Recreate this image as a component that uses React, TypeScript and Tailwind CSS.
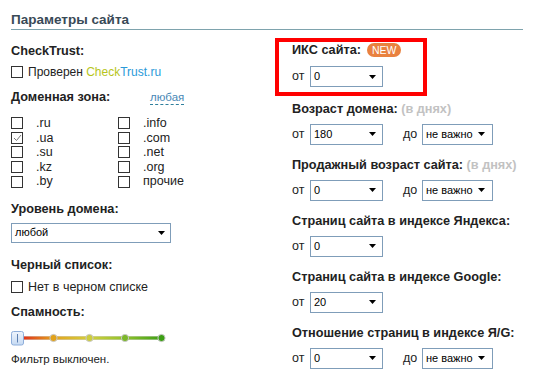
import React from 'react';

const Arrow = () => (
  <svg width="7" height="4" viewBox="0 0 7 4" className="shrink-0">
    <polygon points="0,0 7,0 3.5,4" fill="#000" />
  </svg>
);

function Select({ value, className }: { value: string; className: string }) {
  return (
    <div
      className={`flex items-center justify-between border border-[#7f9db9] bg-white pl-[3px] text-[11px] leading-none text-black ${className}`}
    >
      <span>{value}</span>
      <Arrow />
    </div>
  );
}

function Box({ checked = false }: { checked?: boolean }) {
  return (
    <span className="flex h-[12px] w-[12px] shrink-0 items-center justify-center border border-[#333] bg-white">
      {checked && (
        <svg width="9" height="8" viewBox="0 0 9 8">
          <path d="M1 4 L3.5 6.5 L8 1" fill="none" stroke="#777" strokeWidth="1" />
        </svg>
      )}
    </span>
  );
}

function Label({ children, className = '' }: { children: React.ReactNode; className?: string }) {
  return <div className={`text-[12.7px] font-bold leading-[16px] text-[#222] ${className}`}>{children}</div>;
}

function Range({ label, from, to }: { label: React.ReactNode; from: string; to?: string }) {
  return (
    <div className="flex flex-col">
      <Label>{label}</Label>
      <div className="mt-[7px] flex items-center text-[12.5px]">
        <span className="w-[18px]">от</span>
        <Select value={from} className="h-[21px] w-[73px] pr-[6px]" />
        {to && (
          <>
            <span className="ml-[20px] w-[19px]">до</span>
            <Select value={to} className="h-[21px] w-[71px] pr-[7px]" />
          </>
        )}
      </div>
    </div>
  );
}

const zones = [
  ['.ru', '.info'],
  ['.ua', '.com'],
  ['.su', '.net'],
  ['.kz', '.org'],
  ['.by', 'прочие'],
];

function Spam() {
  return (
    <svg width="160" height="16" viewBox="0 0 160 16" className="mt-[10px]">
      <defs>
        <linearGradient id="track" x1="0" x2="1" y1="0" y2="0">
          <stop offset="0" stopColor="#e2321a" />
          <stop offset="0.22" stopColor="#e4a31e" />
          <stop offset="0.48" stopColor="#d3cf3c" />
          <stop offset="0.74" stopColor="#8fc22c" />
          <stop offset="1" stopColor="#3c9f14" />
        </linearGradient>
        <linearGradient id="thumb" x1="0" x2="0" y1="0" y2="1">
          <stop offset="0" stopColor="#eef4fc" />
          <stop offset="1" stopColor="#c6daf3" />
        </linearGradient>
      </defs>
      <rect x="12" y="6" width="140" height="4" fill="#d0d0d0" />
      <rect x="12" y="6.5" width="139" height="3" fill="url(#track)" />
      {[
        [42.5, '#e2a21a'],
        [78.5, '#cdcd3e'],
        [114, '#7cb82a'],
        [150.5, '#3c9f14'],
      ].map(([x, c]) => (
        <circle key={x as number} cx={x as number} cy="8" r="3.6" fill={c as string} stroke="#c8c8c8" strokeWidth="1" />
      ))}
      <rect x="0.5" y="1.5" width="12" height="13.5" rx="2" fill="url(#thumb)" stroke="#8eaedb" />
      <line x1="6.5" y1="4" x2="6.5" y2="12.5" stroke="#5d7fb0" strokeWidth="1" />
    </svg>
  );
}

export default function App() {
  return (
    <div className="h-[382px] w-[534px] overflow-hidden bg-white font-['Liberation_Sans',Arial,sans-serif] text-[#222]">
      <div className="mx-[11px] border-b border-[#7ea3ad] pb-[1px] pt-[12px] text-[13.5px] font-bold leading-[16px] text-[#394a57]">
        Параметры сайта
      </div>

      <div className="flex">
        {/* left column */}
        <div className="flex w-[275px] shrink-0 flex-col pl-[11px]">
          <Label className="mt-[13px]">CheckTrust:</Label>
          <div className="mt-[7px] flex h-[12px] items-center gap-[5px] text-[12px]">
            <Box />
            <span>
              Проверен <span className="text-[#b7c51c]">Check</span>
              <span className="text-[#2a9ad9]">Trust.ru</span>
            </span>
          </div>

          <div className="mt-[11px] flex items-center">
            <Label className="w-[139px]">Доменная зона:</Label>
            <span className="border-b border-dashed border-[#2f7f9c] text-[11.5px] leading-[14px] text-[#4787b5]">
              любая
            </span>
          </div>

          <div className="mt-[11px] grid w-[200px] grid-cols-[107px_1fr] text-[12.5px]">
            {zones.map(([a, b], i) => (
              <React.Fragment key={a}>
                <div className="flex h-[14.6px] items-center gap-[13px]">
                  <Box checked={i === 1} />
                  <span className="leading-none">{a}</span>
                </div>
                <div className="flex h-[14.6px] items-center gap-[13px]">
                  <Box />
                  <span className="leading-none">{b}</span>
                </div>
              </React.Fragment>
            ))}
          </div>

          <Label className="mt-[12px]">Уровень домена:</Label>
          <Select value="любой" className="mt-[6px] h-[20px] w-[160px] pr-[5px]" />

          <Label className="mt-[14px]">Черный список:</Label>
          <div className="mt-[8px] flex h-[12px] items-center gap-[5px] text-[12.5px]">
            <Box />
            <span>Нет в черном списке</span>
          </div>

          <Label className="mt-[11px]">Спамность:</Label>
          <Spam />
          <div className="mt-[5px] text-[11.5px] leading-[16px]">Фильтр выключен.</div>
        </div>

        {/* right column */}
        <div className="flex flex-col">
          <div className="mt-[8px] flex w-[152px] flex-col border-4 border-[#ff0000] pb-[5px] pl-[13px]">
            <div className="flex items-center">
              <Label>ИКС сайта:</Label>
              <span className="ml-[6px] flex h-[14px] items-center rounded-full bg-[#e9813f] px-[5px] text-[10.5px] leading-none text-white">
                NEW
              </span>
            </div>
            <div className="mt-[8px] flex items-center text-[12.5px]">
              <span className="w-[18px]">от</span>
              <Select value="0" className="h-[21px] w-[73px] pr-[6px]" />
            </div>
          </div>

          <div className="flex flex-col pl-[17px]">
            <div className="mt-[4.5px]">
              <Range
                label={
                  <>
                    Возраст домена: <span className="text-[#c2c2c2]">(в днях)</span>
                  </>
                }
                from="180"
                to="не важно"
              />
            </div>
            <div className="mt-[12px]">
              <Range
                label={
                  <>
                    Продажный возраст сайта: <span className="text-[#c2c2c2]">(в днях)</span>
                  </>
                }
                from="0"
                to="не важно"
              />
            </div>
            <div className="mt-[12px]">
              <Range label="Страниц сайта в индексе Яндекса:" from="0" />
            </div>
            <div className="mt-[12px]">
              <Range label="Страниц сайта в индексе Google:" from="20" />
            </div>
            <div className="mt-[12px]">
              <Range label="Отношение страниц в индексе Я/G:" from="0" to="не важно" />
            </div>
          </div>
        </div>
      </div>
    </div>
  );
}
